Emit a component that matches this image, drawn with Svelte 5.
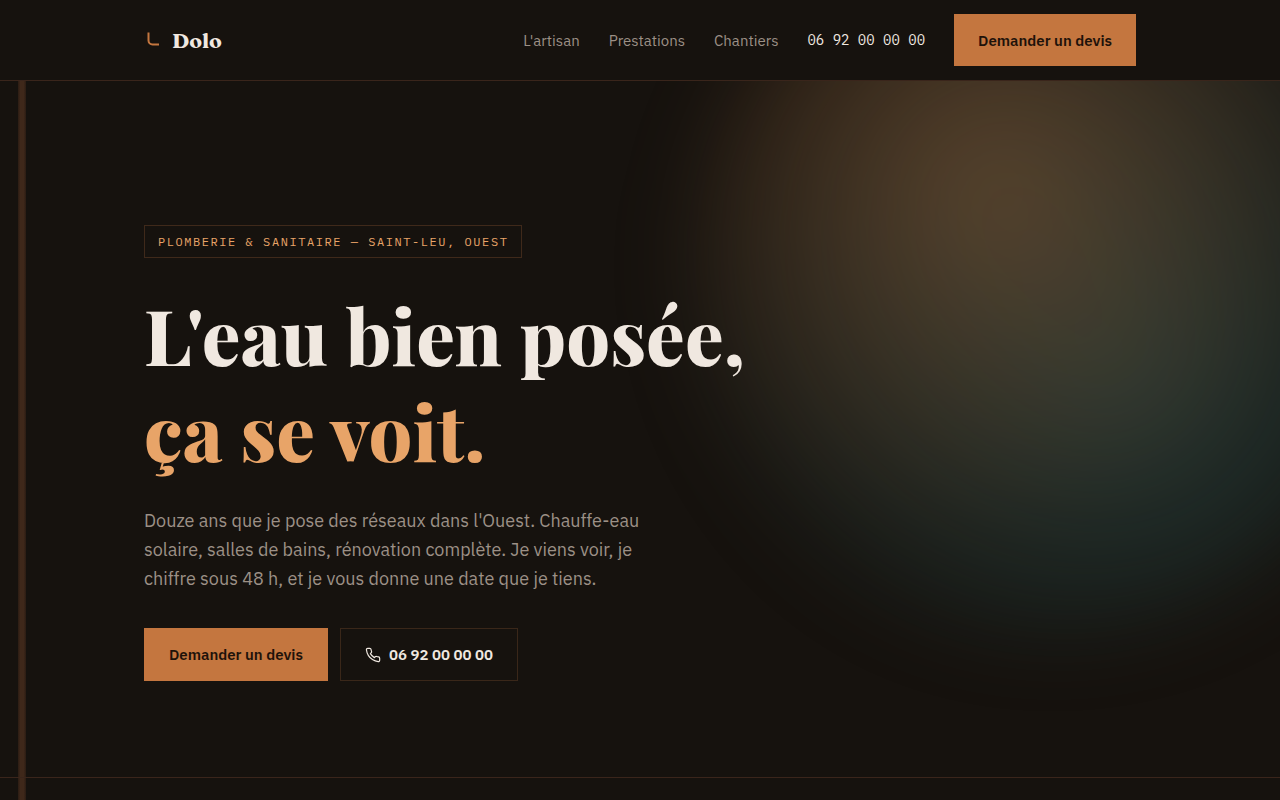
<script>
  const phone = '06 92 00 00 00';

  const links = [
    { label: "L'artisan", href: '#artisan' },
    { label: 'Prestations', href: '#prestations' },
    { label: 'Chantiers', href: '#chantiers' },
  ];
</script>

<svelte:head>
  <title>Dolo</title>
</svelte:head>

<div class="page">
  <header>
    <div class="container bar">
      <a class="logo" href="#top">
        <svg width="18" height="18" viewBox="0 0 18 18" aria-hidden="true">
          <path d="M4.5 1.5v8a4 4 0 0 0 4 4H15" />
        </svg>
        <span>Dolo</span>
      </a>
      <nav>
        {#each links as link}
          <a href={link.href}>{link.label}</a>
        {/each}
        <a class="tel" href="tel:+262692000000">{phone}</a>
        <button class="btn primary">Demander un devis</button>
      </nav>
    </div>
  </header>

  <main>
    <div class="pipe"></div>
    <section class="hero">
      <div class="glow"></div>
      <div class="container content">
        <p class="tag">Plomberie &amp; sanitaire — Saint-Leu, Ouest</p>
        <h1>L'eau bien posée,<br /><span>ça se voit.</span></h1>
        <p class="lead">
          Douze ans que je pose des réseaux dans l'Ouest. Chauffe-eau solaire, salles de bains,
          rénovation complète. Je viens voir, je chiffre sous 48 h, et je vous donne une date que
          je tiens.
        </p>
        <div class="actions">
          <button class="btn primary">Demander un devis</button>
          <a class="btn outline" href="tel:+262692000000">
            <svg width="16" height="16" viewBox="0 0 24 24" aria-hidden="true">
              <path d="M22 16.92v3a2 2 0 0 1-2.18 2 19.79 19.79 0 0 1-8.63-3.07 19.5 19.5 0 0 1-6-6 19.79 19.79 0 0 1-3.07-8.67A2 2 0 0 1 4.11 2h3a2 2 0 0 1 2 1.72c.13.96.36 1.9.7 2.81a2 2 0 0 1-.45 2.11L8.09 9.91a16 16 0 0 0 6 6l1.27-1.27a2 2 0 0 1 2.11-.45c.91.34 1.85.57 2.81.7A2 2 0 0 1 22 16.92z" />
            </svg>
            {phone}
          </a>
        </div>
      </div>
    </section>
  </main>
</div>

<style>
  :global(body) {
    background: #16120e;
  }
  .page {
    display: flex;
    flex-direction: column;
    min-height: 100vh;
    overflow: hidden;
    color: #f0e8e0;
    font-family: "IBM Plex Sans", Roboto, sans-serif;
    font-size: 15px;
  }
  .container {
    max-width: 992px;
    margin: 0 auto;
    padding: 0 24px;
  }
  a {
    color: inherit;
    text-decoration: none;
  }
  svg {
    fill: none;
    stroke: currentColor;
    stroke-width: 2;
    stroke-linecap: round;
    stroke-linejoin: round;
  }

  header {
    position: relative;
    z-index: 2;
    background: #16120e;
    border-bottom: 1px solid #3a251b;
  }
  .bar {
    display: flex;
    align-items: center;
    justify-content: space-between;
    min-height: 80px;
  }
  .logo {
    display: flex;
    align-items: center;
    gap: 10px;
    font-family: Fraunces, "Liberation Serif", serif;
    font-size: 21px;
    font-weight: 700;
    line-height: 28px;
  }
  .logo svg {
    color: #c4763f;
    stroke-linecap: butt;
  }
  nav {
    display: flex;
    align-items: center;
    gap: 29px;
    color: #9c9086;
  }
  .tel {
    color: #f0e8e0;
    font-family: "IBM Plex Mono", "Liberation Mono", monospace;
    font-size: 14px;
  }

  .btn {
    display: inline-flex;
    align-items: center;
    gap: 8px;
    box-sizing: border-box;
    min-height: 52px;
    padding: 0 23px;
    border: 1px solid transparent;
    font-family: inherit;
    font-size: 15px;
    font-weight: 600;
    cursor: pointer;
  }
  .primary {
    background: #c4763f;
    border-color: #c4763f;
    color: #1e120a;
  }
  .outline {
    border-color: #3a2719;
  }

  main {
    position: relative;
    flex: 1;
  }
  .pipe {
    position: absolute;
    top: 0;
    bottom: 0;
    left: 18px;
    width: 8px;
    background: linear-gradient(90deg, #2b1c13, #3f281a 30%, #3f281a 70%, #2b1c13);
  }
  .hero {
    position: relative;
    overflow: hidden;
    border-bottom: 1px solid #3a251b;
  }
  /* warm copper light fading into teal */
  .glow {
    position: absolute;
    top: -170px;
    right: -10%;
    width: 720px;
    height: 720px;
    border-radius: 50%;
    background:
      radial-gradient(circle at 42% 38%, rgba(196, 130, 75, 0.36), transparent 62%),
      radial-gradient(circle at 62% 66%, rgba(45, 95, 95, 0.38), transparent 74%);
    filter: blur(40px);
  }
  .content {
    position: relative;
    padding-top: 144px;
    padding-bottom: 96px;
  }
  .tag {
    width: fit-content;
    margin: 0 0 28px;
    padding: 0 13px;
    border: 1px solid #3f291a;
    color: #e8a468;
    font-family: "IBM Plex Mono", "Liberation Mono", monospace;
    font-size: 12px;
    line-height: 31px;
    letter-spacing: 0.13em;
    text-transform: uppercase;
  }
  h1 {
    margin: 0 0 28px;
    font-family: "Playfair Display", "Liberation Serif", serif;
    font-size: 77px;
    font-weight: 800;
    line-height: 96px;
  }
  h1 span {
    color: #e8a468;
  }
  .lead {
    max-width: 510px;
    margin: 0 0 35px;
    color: #9c9086;
    font-size: 18px;
    line-height: 29px;
  }
  .actions {
    display: flex;
    flex-wrap: wrap;
    gap: 12px;
  }
  .actions .btn {
    min-height: 53px;
    padding: 0 24px;
  }
  .actions svg {
    stroke-width: 1.8;
  }
</style>
